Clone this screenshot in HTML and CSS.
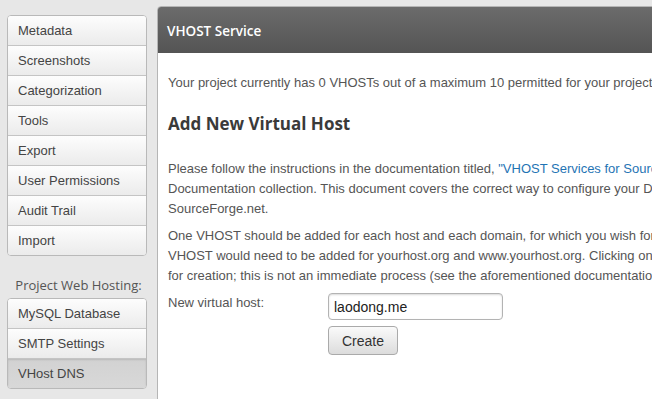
FILE: index.html
```html
<!DOCTYPE html>
<html lang="en">
<head>
    <meta charset="UTF-8">
    <title>VHOST Service</title>
    <link rel="stylesheet" href="styles.css">
</head>
<body>
    <div class="page">
        <div class="sidebar">
            <ul class="nav">
                <li>Metadata</li>
                <li>Screenshots</li>
                <li>Categorization</li>
                <li>Tools</li>
                <li>Export</li>
                <li>User Permissions</li>
                <li>Audit Trail</li>
                <li>Import</li>
            </ul>
            <h4 class="nav-title">Project Web Hosting:</h4>
            <ul class="nav">
                <li>MySQL Database</li>
                <li>SMTP Settings</li>
                <li class="active">VHost DNS</li>
            </ul>
        </div>

        <div class="panel">
            <div class="panel-head">VHOST Service</div>
            <div class="panel-body">
                <p class="count">Your project currently has 0 VHOSTs out of a maximum 10 permitted for your project.</p>
                <h2>Add New Virtual Host</h2>
                <p>Please follow the instructions in the documentation titled, <a href="#">"VHOST Services for SourceForge.net Projects"</a> in the Site<br>
                Documentation collection. This document covers the correct way to configure your DNS to work with<br>
                SourceForge.net.</p>
                <p>One VHOST should be added for each host and each domain, for which you wish for web content to be served. For example, a<br>
                VHOST would need to be added for yourhost.org and www.yourhost.org. Clicking on the "Create" button will submit the request<br>
                for creation; this is not an immediate process (see the aforementioned documentation for details).</p>
                <form class="vhost-form">
                    <label for="vhost">New virtual host:</label>
                    <div class="fields">
                        <input type="text" id="vhost" value="laodong.me">
                        <button type="button">Create</button>
                    </div>
                </form>
            </div>
        </div>
    </div>
</body>
</html>
```

FILE: styles.css
```css
body {
    margin: 0;
    background: #e7e7e7;
    font-family: "Liberation Sans", Arial, sans-serif;
    font-size: 13px;
    color: #555;
    overflow: hidden;
}
.page {
    display: flex;
    align-items: flex-start;
    width: 1100px;
}
.sidebar {
    width: 140px;
    padding: 15px 0 0 7px;
    flex-shrink: 0;
}
.nav {
    list-style: none;
    margin: 0;
    padding: 0;
    border: 1px solid #b9b9b9;
    border-radius: 4px;
    overflow: hidden;
    background: #fff;
}
.nav li {
    height: 29px;
    line-height: 29px;
    padding-left: 10px;
    color: #444;
    background: linear-gradient(#fdfdfd, #ebebeb);
    border-bottom: 1px solid #c4c4c4;
}
.nav li:last-child {
    border-bottom: 0;
}
.nav li.active {
    background: linear-gradient(#d2d2d2, #d8d8d8);
    box-shadow: inset 0 1px 2px rgba(0, 0, 0, 0.12);
}
.nav-title {
    margin: 20px 0 0;
    height: 22px;
    padding-left: 3px;
    font-family: "Open Sans", sans-serif;
    font-size: 13px;
    font-weight: normal;
    color: #555;
    text-align: center;
}
.panel {
    margin: 6px 0 0 10px;
    width: 900px;
    height: 420px;
    background: #fff;
    border: 1px solid #b5b5b5;
    border-radius: 4px 0 0 0;
}
.panel-head {
    height: 46px;
    line-height: 48px;
    padding-left: 9px;
    background: linear-gradient(#6b6b6b, #545454);
    border-radius: 3px 0 0 0;
    color: #fff;
    font-family: "Open Sans", sans-serif;
    font-size: 13.5px;
    font-weight: 600;
}
.panel-body {
    padding: 20px 10px 0;
}
.panel-body p {
    margin: 0 0 7px;
    line-height: 20px;
}
.panel-body p.count {
    margin-bottom: 0;
}
h2 {
    margin: 18px 0 22px;
    height: 26px;
    line-height: 26px;
    font-family: "Open Sans", sans-serif;
    font-size: 17px;
    font-weight: 700;
    color: #3a3a3a;
}
a {
    color: #1f74b4;
    text-decoration: none;
}
.vhost-form {
    display: flex;
    margin-top: 2px;
}
.vhost-form label {
    width: 160px;
    line-height: 20px;
}
.fields {
    display: flex;
    flex-direction: column;
    align-items: flex-start;
    gap: 6px;
}
.fields input {
    width: 163px;
    height: 25px;
    padding: 0 5px;
    border: 1px solid #b3b3b3;
    border-radius: 4px;
    box-shadow: inset 0 1px 2px rgba(0, 0, 0, 0.15);
    font-family: "Liberation Sans", Arial, sans-serif;
    font-size: 14px;
    color: #222;
}
.fields button {
    width: 70px;
    height: 29px;
    border: 1px solid #aaa;
    border-radius: 4px;
    background: linear-gradient(#fafafa, #dcdcdc);
    font-family: "Liberation Sans", Arial, sans-serif;
    font-size: 14px;
    color: #333;
}
```
